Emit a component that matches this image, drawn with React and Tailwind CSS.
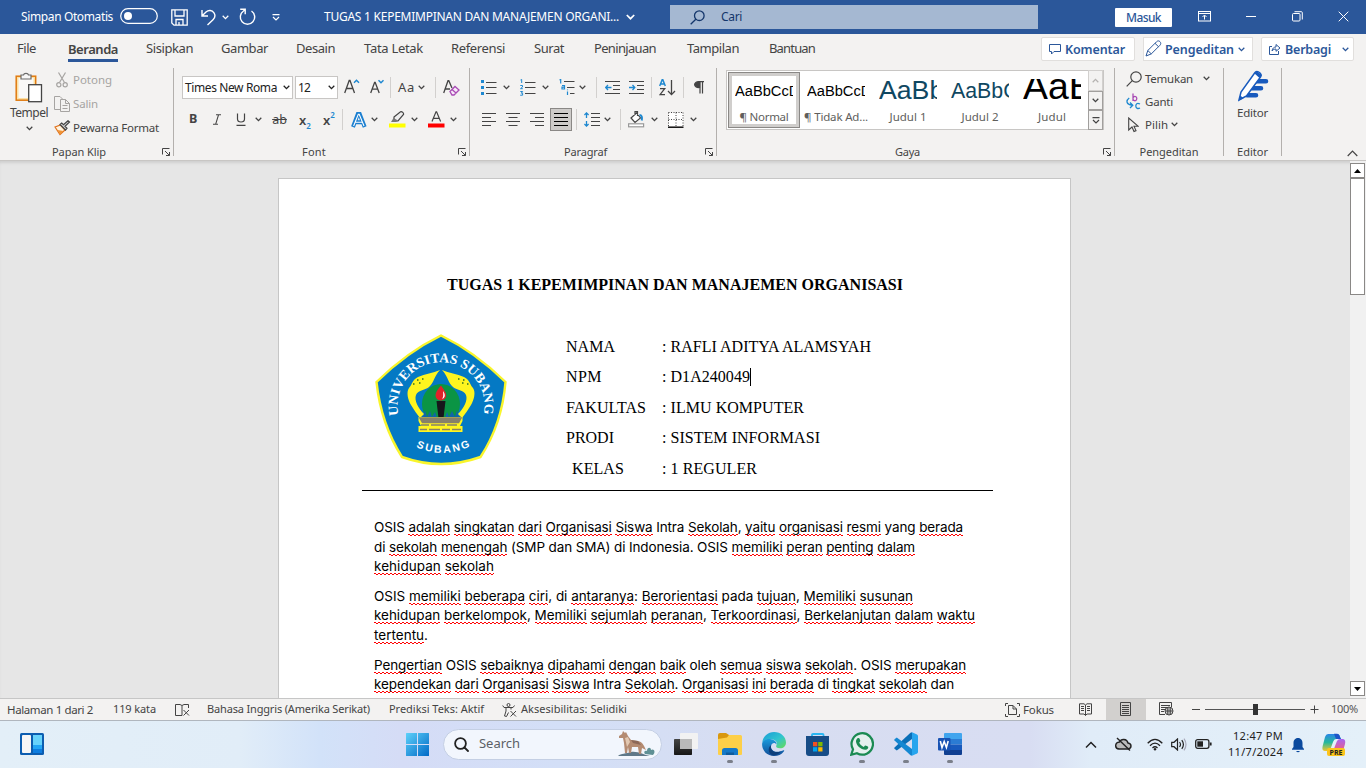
import React, { useLayoutEffect, useRef, useState } from "react";

/* Single line of text whose tracking is adjusted so it fills the width of its box. */
function T({ className = "", children }) {
  const box = useRef(null);
  const inner = useRef(null);
  const [ls, setLs] = useState(0);
  useLayoutEffect(() => {
    const n = inner.current.textContent.length;
    const natural = inner.current.getBoundingClientRect().width;
    setLs((box.current.clientWidth - natural) / Math.max(1, n));
  }, []);
  return (
    <span ref={box} className={"block shrink-0 whitespace-nowrap " + className}>
      <span ref={inner} style={{ letterSpacing: ls + "px" }}>{children}</span>
    </span>
  );
}

function I({ w, h, className = "", children, ...rest }) {
  return (
    <svg width={w} height={h} viewBox={`0 0 ${w} ${h}`} fill="none" stroke="currentColor" strokeWidth="1" className={"block shrink-0 " + className} {...rest}>
      {children}
    </svg>
  );
}

const Chev = ({ className = "" }) => (
  <I w={7} h={5} className={className} strokeWidth="1.3"><path d="M.7 .8L3.5 3.6L6.3 .8" /></I>
);
const Sep = ({ className = "" }) => <div className={"h-[21px] w-px shrink-0 bg-[#d2d0ce] " + className} />;
const GroupLine = () => <div className="mt-[2px] h-[88px] w-px shrink-0 bg-[#b3b0ad]" />;
const Launcher = ({ className = "" }) => (
  <I w={9} h={9} className={className}><path d="M.5 6.5V.5H7.5M3 3L7.5 7.5M7.5 4V7.5H4" /></I>
);

function TitleBar() {
  return (
    <header className="flex h-[34px] shrink-0 items-center bg-[#2b579a] text-[12px] text-white">
      <T className="ml-[21px] w-[92px]">Simpan Otomatis</T>
      <I w={38} h={16} className="-mt-[2px] ml-[7px]"><rect x=".7" y=".7" width="36.6" height="14.6" rx="7.3" strokeWidth="1.2" /><circle cx="8" cy="8" r="4" fill="white" stroke="none" /></I>
      <I w={17} h={17} className="ml-[13px] mt-[1px]" strokeWidth="1.3"><path d="M.8 .8H16.2V16.2H3L.8 14ZM4 1V7H13V1M5 16V10.5H12V16M8 13V16" /></I>
      <I w={15} h={17} className="ml-[13px]" strokeWidth="1.4"><path d="M1 1V7H7M1.2 6.8L5 3C7.5 .8 11 1 13 3.8C14.6 6.3 14 8.7 12 10.7L6.5 16" /></I>
      <Chev className="ml-[6px]" />
      <I w={17} h={18} className="ml-[10px]" strokeWidth="1.4"><path d="M1.2 1.2H6.2V6.2M12.5 3A7.2 7.2 0 1 1 4.5 3L6 1.5" /></I>
      <I w={8} h={7} className="ml-[16px]" strokeWidth="1.2"><path d="M.5 .7H7.5M1 3L4 6L7 3" /></I>
      <T className="ml-[44px] w-[295px]">TUGAS 1 KEPEMIMPINAN DAN MANAJEMEN ORGANI...</T>
      <I w={9} h={6} className="ml-[7px]" strokeWidth="1.7"><path d="M.8 1L4.5 4.7L8.2 1" /></I>
      <div className="ml-[35px] flex h-[24px] w-[368px] shrink-0 items-center bg-[#a5b8d2] text-[#14366b]">
        <I w={15} h={15} className="ml-[20px]" strokeWidth="1.3"><circle cx="9.3" cy="5.7" r="4.8" /><path d="M5.8 9.2L.7 14.3" /></I>
        <T className="ml-[16px] w-[21px]">Cari</T>
      </div>
      <div className="ml-[77px] flex h-[19px] w-[57px] shrink-0 items-center justify-center rounded-[1px] bg-white pt-[2px] text-[#2b579a]">
        <T className="w-[35px] font-medium">Masuk</T>
      </div>
      <I w={13} h={11} className="-mt-[2px] ml-[26px]"><rect x=".5" y=".5" width="12" height="9.5" /><path d="M1 2.5H12M6.5 8.5V4.5M4.5 6L6.5 4L8.5 6" /></I>
      <div className="-mt-[2px] ml-[35px] h-px w-[10px] bg-white" />
      <I w={11} h={11} className="-mt-[2px] ml-[36px]"><rect x=".5" y="2.5" width="7.5" height="7.5" rx="1" /><path d="M2.5 .7H9.3C10 .7 10.3 1 10.3 1.7V8.5" /></I>
      <I w={11} h={11} className="-mt-[2px] ml-[35px]"><path d="M.7 .7L10.3 10.3M10.3 .7L.7 10.3" /></I>
    </header>
  );
}

function Tabs() {
  return (
    <nav className="flex h-[32px] shrink-0 items-center pb-[2px] text-[13px] text-[#444]">
      <T className="ml-[17px] w-[19px]">File</T>
      <div className="ml-[32px] flex h-full w-[50px] shrink-0 flex-col">
        <T className="h-[25px] w-[50px] pt-[3px] font-semibold leading-[24px] text-[#444]">Beranda</T>
        <div className="h-[3px] shrink-0 bg-[#2b579a]" />
      </div>
      <T className="ml-[28px] w-[47px]">Sisipkan</T>
      <T className="ml-[28px] w-[47px]">Gambar</T>
      <T className="ml-[28px] w-[39px]">Desain</T>
      <T className="ml-[29px] w-[59px]">Tata Letak</T>
      <T className="ml-[28px] w-[54px]">Referensi</T>
      <T className="ml-[29px] w-[30px]">Surat</T>
      <T className="ml-[30px] w-[62px]">Peninjauan</T>
      <T className="ml-[31px] w-[52px]">Tampilan</T>
      <T className="ml-[30px] w-[46px]">Bantuan</T>
      <div className="ml-[226px] flex h-[24px] w-[94px] shrink-0 items-center rounded-[2px] border border-[#e1dfdd] bg-white text-[12.5px] font-semibold text-[#2b579a]">
        <I w={12} h={11} className="ml-[7px]"><path d="M.5 .5H11.5V7.5H5L2.5 10V7.5H.5Z" /></I>
        <T className="ml-[4px] w-[60px] pt-[2px]">Komentar</T>
      </div>
      <div className="ml-[8px] flex h-[24px] w-[110px] shrink-0 items-center border border-[#e1dfdd] bg-white text-[12.5px] font-semibold text-[#2b579a]">
        <I w={17} h={17} className="-mt-[2px] ml-[1px]"><path d="M1 16L2.8 10.5L11.5 1.8C12.8 .5 14 .7 15 1.7C16 2.8 16 4 15 5.2L6.3 13.9ZM2.8 10.5L6.3 13.9M10 3.3L13.5 6.7" /></I>
        <T className="ml-[3px] w-[69px] pt-[2px]">Pengeditan</T>
        <Chev className="ml-[4px]" />
      </div>
      <div className="ml-[8px] flex h-[24px] w-[93px] shrink-0 items-center rounded-[2px] border border-[#e1dfdd] bg-white text-[12.5px] font-semibold text-[#2b579a]">
        <I w={12} h={12} className="ml-[7px]"><path d="M3 3.5H.5V11.5H9.5V8M3 8C3.5 5 5 4 7 4V1.5L11 5L7 8.3V6C5.5 6 4 6.5 3 8Z" /></I>
        <T className="ml-[4px] w-[46px] pt-[2px]">Berbagi</T>
        <Chev className="ml-[11px]" />
      </div>
    </nav>
  );
}

function ClipboardGroup() {
  return (
    <div className="flex w-[173px] shrink-0 flex-col">
      <div className="flex h-[78px]">
        <div className="ml-[10px] flex w-[38px] shrink-0 flex-col items-center">
          <I w={28} h={31} className="mt-[6px]" strokeWidth="1.5">
            <rect x="1.2" y="4.2" width="19.5" height="24" fill="#fbe0a4" stroke="#e07a10" />
            <rect x="3.5" y="6" width="15" height="20" fill="#faf9f8" stroke="none" />
            <path d="M6 7V3H8.5C9 .8 13 .8 13.5 3H16V7Z" fill="#f7f7f7" stroke="#6a6a6a" strokeWidth="1.2" />
            <rect x="13.7" y="12.7" width="12.8" height="17" fill="white" stroke="#444" strokeWidth="1.3" />
          </I>
          <T className="w-[38px] leading-[20px]">Tempel</T>
          <Chev className="mt-[3px]" />
        </div>
        <div className="ml-[6px] flex flex-col pt-[2px] text-[11.5px]">
          <div className="flex h-[24px] items-center text-[#a6a4a2]">
            <I w={13} h={16} className="ml-[2px]" strokeWidth="1.2"><path d="M2.5 .5L8.5 10.5M9.5 .5L3.5 10.5" /><circle cx="2.8" cy="12.8" r="2.1" /><circle cx="9.2" cy="12.8" r="2.1" /></I>
            <T className="ml-[4px] w-[39px]">Potong</T>
          </div>
          <div className="flex h-[24px] items-center text-[#a6a4a2]">
            <I w={17} h={16}><path d="M6 13.5H.5V.5H6L8.5 3M6.5 3.5H11.5L15.5 7.5V15.5H6.5ZM11.5 3.5V7.5H15.5M8.5 9.5H13.5M8.5 12.5H13.5" /></I>
            <T className="ml-[2px] w-[25px]">Salin</T>
          </div>
          <div className="flex h-[24px] items-center">
            <I w={17} h={16} strokeWidth="1.2"><path d="M1 7L6 14.5L11 10L6.5 5Z" fill="#fff4df" stroke="#e0701a" /><path d="M3.5 10L6 14.5L9.5 11Z" fill="#f09436" stroke="none" /><path d="M6 4.5L11.5 10L13 8.3L11 6.2L15.5 2L14 .7L9.5 4.6L7.7 3Z" fill="#d6d6d6" stroke="#444" /></I>
            <T className="ml-[2px] w-[86px]">Pewarna Format</T>
          </div>
        </div>
      </div>
      <div className="flex h-[16px] items-center text-[11px]">
        <T className="ml-[52px] w-[54px]">Papan Klip</T>
        <Launcher className="ml-[56px]" />
      </div>
    </div>
  );
}

function FontGroup() {
  return (
    <div className="flex w-[295px] shrink-0 flex-col">
      <div className="mt-[10px] flex h-[23px] items-center">
        <div className="ml-[8px] flex h-[23px] w-[111px] shrink-0 items-center border border-[#c8c6c4] bg-white text-[#222]">
          <T className="ml-[2px] w-[92px]">Times New Roma</T>
          <Chev className="ml-[6px]" />
        </div>
        <div className="ml-[2px] flex h-[23px] w-[43px] shrink-0 items-center border border-[#c8c6c4] bg-white text-[#222]">
          <T className="ml-[2px] w-[12px]">12</T>
          <Chev className="ml-[18px]" />
        </div>
        <I w={16} h={15} className="-mt-[2px] ml-[6px]" strokeWidth="1.3"><path d="M.7 14L5.2 1.5H6L10.5 14M2.3 9.5H9" /><path d="M10 3.8L12.5 1.2L15 3.8" stroke="#1e88d0" strokeWidth="1.4" /></I>
        <I w={15} h={15} className="-mt-[2px] ml-[10px]" strokeWidth="1.3"><path d="M.7 14L4.6 3.5H5.2L9.2 14M2 10.2H7.8" /><path d="M8.5 1.2L11 3.8L13.5 1.2" stroke="#1e88d0" strokeWidth="1.4" /></I>
        <Sep className="ml-[5px]" />
        <T className="ml-[7px] w-[17px] text-[13px]">Aa</T>
        <Chev className="ml-[3px]" />
        <Sep className="ml-[10px]" />
        <I w={17} h={16} className="ml-[7px]" strokeWidth="1.3"><path d="M.7 13L5 .7H5.8L9 8M2 9H7" /><path d="M7 11.5L12 6.5L16 10L11 15H9Z M9 9.5L13 13" stroke="#a94bb5" fill="#f7e9f8" /></I>
      </div>
      <div className="mt-[9px] flex h-[23px] items-center">
        <T className="ml-[15px] w-[8px] text-[12.5px] font-bold">B</T>
        <I w={8} h={11} className="ml-[16px]" strokeWidth="1.1"><path d="M3 .7H8M0 10.3H5M5.6 .7L2.6 10.3" /></I>
        <I w={10} h={13} className="ml-[15px]" strokeWidth="1.2"><path d="M1.5 .5V6C1.5 10 8.5 10 8.5 6V.5M.5 12.3H9.5" /></I>
        <Chev className="ml-[9px]" />
        <div className="ml-[9px] flex h-[16px] w-[17px] shrink-0 flex-col items-center justify-center">
          <span className="text-[12.5px] leading-[16px] line-through">ab</span>
        </div>
        <div className="ml-[11px] flex w-[12px] shrink-0 items-end font-semibold"><span className="text-[13px] leading-[16px]">x</span><span className="-mb-[2px] text-[8px] leading-[9px] text-[#1e88d0]">2</span></div>
        <div className="ml-[12px] flex w-[12px] shrink-0 items-start font-semibold"><span className="text-[13px] leading-[16px]">x</span><span className="-mt-[2px] text-[8px] leading-[9px] text-[#1e88d0]">2</span></div>
        <Sep className="ml-[7px]" />
        <I w={16} h={16} className="ml-[8px]"><path d="M2 15L7 1.5H8.5L13.7 15M4.5 10.3H11.2" stroke="#1b7fd0" strokeWidth="4" /><path d="M2.6 14L7.3 2.3H8.2L13 14M4.5 10.3H11.2" stroke="white" strokeWidth="1.1" /></I>
        <Chev className="ml-[4px]" />
        <I w={17} h={17} className="ml-[11px]" strokeWidth="1.2"><path d="M5 6L11.5 .8C13 .3 15 2 14.5 3.5L9 10H6.5L5 8.5Z" fill="#eee" /><path d="M4.5 7L2 11H7L9 9.5Z" fill="#777" stroke="none" /><rect x="0" y="12.5" width="16.5" height="4" fill="#ffff00" stroke="none" /></I>
        <Chev className="ml-[5px]" />
        <I w={17} h={17} className="ml-[10px]" strokeWidth="1.2"><path d="M4 10.5L8 .8H8.6L12.6 10.5M5.3 7.3H11.3" /><rect x="0" y="12.5" width="16.5" height="4" fill="#ff0000" stroke="none" /></I>
        <Chev className="ml-[5px]" />
      </div>
      <div className="mt-[13px] flex h-[16px] items-center text-[11px]">
        <T className="ml-[128px] w-[24px]">Font</T>
        <Launcher className="ml-[132px]" />
      </div>
    </div>
  );
}

function ParagraphGroup() {
  return (
    <div className="flex w-[246px] shrink-0 flex-col">
      <div className="mt-[10px] flex h-[23px] items-center">
        <I w={16} h={15} className="ml-[11px]"><path d="M5 2.5H15.5M5 7.5H15.5M5 13.5H15.5" /><path d="M0 1.5H3M0 7.5H3M0 13.5H3" stroke="#1e88d0" strokeWidth="3" /></I>
        <Chev className="ml-[6px]" />
        <I w={16} h={17} className="ml-[10px]"><path d="M5 3.5H15.5M5 8.5H15.5M5 14.5H15.5" /><path d="M.5 1L1.7 .5V4M.3 6.5H2.5V8L.5 9.7H2.8M.3 12.5H2.6L1.3 14.2H2.6V16.2H.2" stroke="#1e88d0" /></I>
        <Chev className="ml-[6px]" />
        <I w={16} h={17} className="ml-[10px]"><path d="M5 2.5H15.5M8 8.5H15.5M11 14.5H15.5" /><path d="M.5 1L1.7 .5V4.5M3 6.5H5.5V10H3V8.2H5.5M8.5 12.5V16M8.5 10.5V11.3" stroke="#1e88d0" strokeWidth="1.2" /></I>
        <Chev className="ml-[4px]" />
        <Sep className="ml-[10px]" />
        <I w={15} h={13} className="ml-[8px]"><path d="M0 .5H15M8 4.5H15M8 8.5H15M0 12.5H15" /><path d="M.7 6.5H6.5M3 4L.7 6.5L3 9" stroke="#1e88d0" strokeWidth="1.3" /></I>
        <I w={15} h={13} className="ml-[9px]"><path d="M0 .5H15M8 4.5H15M8 8.5H15M0 12.5H15" /><path d="M0 6.5H5.8M3.5 4L5.8 6.5L3.5 9" stroke="#1e88d0" strokeWidth="1.3" /></I>
        <Sep className="ml-[7px]" />
        <I w={17} h={17} className="ml-[7px]" strokeWidth="1.3"><path d="M.7 7L3.2 .7H3.8L6.3 7M1.5 5H5.5" stroke="#1e88d0" strokeWidth="1.5" /><path d="M1 9.7H5.7L1 15.7H6M12.5 1V15.5M9 12L12.5 15.6L16 12" /></I>
        <Sep className="ml-[7px]" />
        <I w={10} h={13} className="ml-[10px]" strokeWidth="1.2"><path d="M10 .7H4.5M6 .7V12.5M8.5 .7V12.5" /><path d="M5.5 .7C-1 0 -1 7 5.5 6.5Z" fill="currentColor" /></I>
      </div>
      <div className="mt-[9px] flex h-[23px] items-center">
        <I w={15} h={13} className="ml-[12px]"><path d="M0 .5H14M0 4.5H9M0 8.5H14M0 12.5H9" /></I>
        <I w={15} h={13} className="ml-[9px]"><path d="M0 .5H14M2.5 4.5H11.5M0 8.5H14M2.5 12.5H11.5" /></I>
        <I w={15} h={13} className="ml-[9px]"><path d="M0 .5H14M5 4.5H14M0 8.5H14M5 12.5H14" /></I>
        <div className="ml-[5px] flex h-[23px] w-[22px] shrink-0 items-center justify-center border border-[#8a8886] bg-[#cdcbc9] text-black">
          <I w={14} h={13}><path d="M0 .5H14M0 4.5H14M0 8.5H14M0 12.5H14" /></I>
        </div>
        <Sep className="ml-[4px]" />
        <I w={16} h={15} className="ml-[7px]"><path d="M7 1.5H16M7 5.5H16M7 9.5H16M7 13.5H16" /><path d="M2.5 1V6M.4 3L2.5 .9L4.6 3M2.5 9V14M.4 12L2.5 14.1L4.6 12" stroke="#1e88d0" strokeWidth="1.3" /></I>
        <Chev className="ml-[4px]" />
        <Sep className="ml-[9px]" />
        <I w={17} h={17} className="ml-[7px]" strokeWidth="1.2"><path d="M3 7L8.5 2L12.5 7L7 11.5Z M7 4V.7H9.5V5" fill="white" /><path d="M11.5 4C13.5 4 14.5 6 13.7 9.5" stroke="#1e88d0" strokeWidth="2" /><rect x=".6" y="12.8" width="15" height="3" fill="white" stroke="#999" /></I>
        <Chev className="ml-[6px]" />
        <I w={16} h={16} className="ml-[10px]"><rect x="1" y="1" width="14" height="13" fill="white" stroke="none" /><path d="M.5 .5H15.5M.5 .5V14M15 .5V14M8 .5V14M.5 7.5H15.5" strokeDasharray="1 1.5" /><path d="M0 15.2H15.5" stroke="black" strokeWidth="1.4" /></I>
        <Chev className="ml-[6px]" />
      </div>
      <div className="mt-[13px] flex h-[16px] items-center text-[11px]">
        <T className="ml-[94px] w-[43px]">Paragraf</T>
        <Launcher className="ml-[98px]" />
      </div>
    </div>
  );
}

function Style({ sample, size, name, nameW, selected }) {
  return (
    <div className={"flex h-[56px] w-[72px] shrink-0 flex-col items-center " + (selected ? "border border-[#8a8886] shadow-[inset_0_0_0_3px_#d0cecc]" : "border border-transparent")}>
      <div className={"mt-[6px] flex h-[21px] w-[58px] shrink-0 items-end overflow-hidden whitespace-nowrap font-['Liberation_Sans',sans-serif] " + size}>{sample}</div>
      <T className={"mt-[7px] text-[11.5px] leading-[20px] text-[#605e5c] " + nameW}>{name}</T>
    </div>
  );
}

function StylesGroup() {
  return (
    <div className="flex w-[397px] shrink-0 flex-col">
      <div className="ml-[9px] mt-[4px] flex h-[60px] w-[378px] border border-[#c8c6c4] bg-white">
        <div className="ml-[1px] mt-[1px] flex w-[361px]">
          <Style selected sample="AaBbCcD" size="text-[14.67px] leading-[17px] text-black" name="¶ Normal" nameW="w-[49px]" />
          <Style sample="AaBbCcD" size="text-[14.67px] leading-[17px] text-black" name="¶ Tidak Ad..." nameW="w-[64px]" />
          <Style sample="AaBb" size="text-[26.67px] leading-[20.5px] text-[#0f4761]" name="Judul 1" nameW="w-[37px]" />
          <Style sample="AaBbC" size="text-[21.33px] leading-[17px] text-[#0f4761]" name="Judul 2" nameW="w-[37px]" />
          <Style sample="AaB" size="text-[37.33px] leading-[28px] text-black" name="Judul" nameW="w-[28px]" />
        </div>
        <div className="-my-px flex w-[15px] flex-col">
          <div className="flex h-[21px] items-center justify-center border border-[#d2d0ce] bg-[#f3f2f1] text-[#b5b3b1]"><Chev className="rotate-180" /></div>
          <div className="flex h-[19px] items-center justify-center border border-[#a19f9d] bg-[#f3f2f1]"><Chev /></div>
          <div className="flex h-[20px] items-center justify-center border border-[#a19f9d] bg-[#f3f2f1]"><I w={8} h={7} strokeWidth="1.2"><path d="M.5 .7H7.5M1 3L4 6L7 3" /></I></div>
        </div>
      </div>
      <div className="mt-[14px] flex h-[16px] items-center text-[11px]">
        <T className="ml-[178px] w-[25px]">Gaya</T>
        <Launcher className="ml-[183px]" />
      </div>
    </div>
  );
}

function Ribbon() {
  return (
    <section className="flex h-[95px] shrink-0 border-b border-[#c8c6c4] text-[12px] text-[#444]">
      <ClipboardGroup />
      <GroupLine />
      <FontGroup />
      <GroupLine />
      <ParagraphGroup />
      <GroupLine />
      <StylesGroup />
      <GroupLine />
      <div className="flex w-[108px] shrink-0 flex-col">
        <div className="flex h-[78px] flex-col pt-[1px] text-[11.5px]">
          <div className="flex h-[23px] items-center">
            <I w={16} h={16} className="ml-[11px]" strokeWidth="1.2"><circle cx="10" cy="6" r="5.2" /><path d="M6.3 9.7L.7 15.3" /></I>
            <T className="ml-[3px] w-[48px]">Temukan</T>
            <Chev className="ml-[10px]" />
          </div>
          <div className="flex h-[23px] items-center">
            <I w={15} h={17} className="ml-[11px]" strokeWidth="1.3"><path d="M7 .5V8M7 5.3A1.9 2.2 0 1 1 7 5.8" stroke="#a94bb5" /><path d="M14 11C11 9.500 9.800 11 9.800 13C9.800 15.500 12 16 14 15" stroke="#1e88d0" /><path d="M3.200 5C-.5 8 .5 11.500 6 12.200M4 9.500L6.800 12.200L4 15" stroke="#1e88d0" /></I>
            <T className="ml-[4px] w-[28px]">Ganti</T>
          </div>
          <div className="flex h-[23px] items-center">
            <I w={11} h={16} className="ml-[13px]" strokeWidth="1.1"><path d="M.7 1V13L4 10L6 14.5L8 13.6L6 9.2H10Z" /></I>
            <T className="ml-[6px] w-[23px]">Pilih</T>
            <Chev className="ml-[3px]" />
          </div>
        </div>
        <div className="flex h-[16px] items-center justify-center text-[11px]"><T className="w-[59px]">Pengeditan</T></div>
      </div>
      <GroupLine />
      <div className="flex w-[57px] shrink-0 flex-col items-center">
        <I w={31} h={32} className="ml-[1px] mt-[4px]"><path d="M18 11.3H28M14 18.3H23M9 25.3H18" stroke="#185abd" strokeWidth="4.6" strokeLinecap="round" /><path d="M1 30L3 22L17 2.5C18.5 1 20.5 1.7 22 3C23.5 4.5 23.5 5.7 22.5 7L8.5 26Z" fill="white" stroke="#185abd" strokeWidth="1.5" /><path d="M16.5 3.5L18.5 1L23.7 5L21.5 8Z M1 30.5L2.3 25.5L5.5 28.3Z" fill="#185abd" stroke="none" /></I>
        <T className="mt-[1px] w-[31px] text-[11.5px] leading-[20px]">Editor</T>
        <div className="mt-[21px] flex h-[16px] items-center text-[11px]"><T className="w-[31px]">Editor</T></div>
      </div>
      <GroupLine />
      <I w={11} h={7} className="ml-[65px] mt-[84px]" strokeWidth="1.2"><path d="M.7 6L5.5 1.2L10.3 6" /></I>
    </section>
  );
}

function Crest() {
  return (
    <svg width="132" height="132" viewBox="0 0 132 132" className="block shrink-0">
      <path d="M66 1.500Q100 18 130.500 48Q127 90 105.500 123Q66 137 27 123Q6 90 1.500 48Q32 18 66 1.500Z" fill="#0479c4" stroke="#f9f52b" strokeWidth="2.400" />
      <defs>
        <path id="arcTop" d="M23.500 81A43.500 43.500 0 1 1 108.500 81" />
        <path id="arcBottom" d="M40 112.500Q67 125.500 96 112" />
      </defs>
      <text fill="white" fontFamily="Liberation Serif, serif" fontWeight="bold" fontSize="13.500"><textPath href="#arcTop" textLength="154" lengthAdjust="spacingAndGlyphs">UNIVERSITAS SUBANG</textPath></text>
      <text fill="white" fontFamily="Liberation Sans, sans-serif" fontWeight="bold" fontSize="10.500"><textPath href="#arcBottom" textLength="56" lengthAdjust="spacing" startOffset="1">SUBANG</textPath></text>
      <ellipse cx="66" cy="70" rx="19" ry="20" fill="#0b9444" />
      <path d="M47 84V78L48 84L50 76L52 83L55 77L57 83L60 78L62 84H70L72 78L74 83L77 77L80 83L82 76L84 84L86 78V85H47Z" fill="#1265a8" />
      <path d="M65 36C58 39 50 40 43 43C37 46 37 51 34 54C31 58 33 66 36 71C39 76 42 80 45 84L49 80C43 74 39 66 41 61C43 56 51 56 54 53C59 49 59 42 65 36Z" fill="#fff51f" />
      <path d="M67 36C74 39 82 40 89 43C95 46 95 51 98 54C101 58 99 66 96 71C93 76 90 80 87 84L83 80C89 74 93 66 91 61C89 56 81 56 78 53C73 49 73 42 67 36Z" fill="#fff51f" />
      <path d="M42 46h1.500M47 45h1.500M38 50h1.500M44 49h1.500M88 46h1.500M83 45h1.500M92 50h1.500M87 49h1.500" stroke="#35701f" strokeWidth="1.500" />
      <path d="M61.500 67H70.500L68.500 84H63.500Z" fill="#17171b" />
      <path d="M66 51.500C62 56 58.500 61 62 65C64 67 69 67 70.500 64C73 60 69 56 66 51.500Z" fill="#e02229" />
      <path d="M68 57C71 61 70 64 67 65C69 62 68 60 68 57Z" fill="white" />
      <path d="M43.500 83H87.500V87L85 92H87.500V98H43.500V92H46L43.500 87Z" fill="#fff51f" />
      <path d="M45 84H86L83.500 88.500H47.500ZM46 91h8M56 91h14M72 91h10M45 95.500h7M54 95.500h11M67 95.500h8M77 95.500h9" fill="#87816a" stroke="#87816a" strokeWidth="1.600" />
    </svg>
  );
}

/* Word flagged by the spelling checker: a two-row zigzag drawn under the baseline. */
const U = ({ children }) => (
  <span className="bg-[linear-gradient(90deg,#f00_50%,transparent_50%),linear-gradient(90deg,transparent_50%,#f00_50%)] bg-[length:4px_1px] bg-repeat-x pb-[1px] [background-position:0_calc(100%_-_1px),0_100%]">{children}</span>
);

function Field({ label, labelClass, valueClass, children, cursor }) {
  return (
    <div className="flex h-[30.5px] items-center">
      <div className="w-[96px] shrink-0"><T className={labelClass}>{label}</T></div>
      <T className={valueClass}>{children}</T>
      {cursor && <div className="h-[18px] w-px bg-black" />}
    </div>
  );
}

function Document() {
  const line = "h-[19.6px] leading-[19.6px] ";
  return (
    <article className="ml-[278px] mt-[17px] flex w-[793px] shrink-0 flex-col border border-b-0 border-[#c6c6c6] bg-white text-black">
      <T className="ml-[168px] mt-[96px] w-[456px] font-['Liberation_Serif',serif] text-[16px] font-bold leading-[20px]">TUGAS 1 KEPEMIMPINAN DAN MANAJEMEN ORGANISASI</T>
      <div className="mt-[35px] flex h-[160px] font-['Liberation_Serif',serif] text-[16px]">
        <div className="ml-[96px] mt-[4px] w-[191px] shrink-0"><Crest /></div>
        <div className="flex flex-col pt-[1.5px]">
          <Field label="NAMA" labelClass="w-[49px]" valueClass="w-[209px]">: RAFLI ADITYA ALAMSYAH</Field>
          <Field label="NPM" labelClass="w-[36px]" valueClass="w-[88px]" cursor>: D1A240049</Field>
          <Field label="FAKULTAS" labelClass="w-[80px]" valueClass="w-[142px]">: ILMU KOMPUTER</Field>
          <Field label="PRODI" labelClass="w-[48px]" valueClass="w-[158px]">: SISTEM INFORMASI</Field>
          <Field label="KELAS" labelClass="ml-[6px] w-[52px]" valueClass="w-[95px]">: 1 REGULER</Field>
        </div>
      </div>
      <div className="ml-[83px] h-px w-[631px] shrink-0 bg-black" />
      <div className="ml-[95px] mt-[27px] flex flex-col font-[Inter,sans-serif] text-[13.5px] text-black">
        <T className={line + "w-[589px]"}>OSIS <U>adalah</U> <U>singkatan</U> <U>dari</U> <U>Organisasi</U> <U>Siswa</U> Intra <U>Sekolah</U>, <U>yaitu</U> <U>organisasi</U> <U>resmi</U> yang <U>berada</U></T>
        <T className={line + "w-[541px]"}>di <U>sekolah</U> <U>menengah</U> (SMP dan SMA) di Indonesia. OSIS <U>memiliki</U> <U>peran</U> <U>penting</U> <U>dalam</U></T>
        <T className={line + "w-[120px]"}><U>kehidupan</U> <U>sekolah</U></T>
        <T className={line + "mt-[10px] w-[539px]"}>OSIS <U>memiliki</U> <U>beberapa</U> <U>ciri</U>, di <U>antaranya</U>: <U>Berorientasi</U> pada <U>tujuan</U>, <U>Memiliki</U> <U>susunan</U></T>
        <T className={line + "w-[601px]"}><U>kehidupan</U> <U>berkelompok</U>, <U>Memiliki</U> <U>sejumlah</U> <U>peranan</U>, <U>Terkoordinasi</U>, <U>Berkelanjutan</U> <U>dalam</U> <U>waktu</U></T>
        <T className={line + "w-[54px]"}><U>tertentu</U>.</T>
        <T className={line + "mt-[10px] w-[592px]"}><U>Pengertian</U> OSIS <U>sebaiknya</U> <U>dipahami</U> <U>dengan</U> <U>baik</U> oleh <U>semua</U> <U>siswa</U> <U>sekolah</U>. OSIS <U>merupakan</U></T>
        <T className={line + "w-[580px]"}><U>kependekan</U> <U>dari</U> <U>Organisasi</U> <U>Siswa</U> Intra <U>Sekolah</U>. <U>Organisasi</U> <U>ini</U> <U>berada</U> di <U>tingkat</U> <U>sekolah</U> dan</T>
      </div>
    </article>
  );
}

function ScrollBar() {
  return (
    <div className="ml-auto flex w-[16px] shrink-0 flex-col bg-[#f1f1f1] pt-[2px] text-black">
      <div className="flex h-[15px] w-[15px] items-center justify-center border border-[#8a8886] bg-white"><I w={7} h={4}><path d="M0 4L3.500 0L7 4Z" fill="currentColor" stroke="none" /></I></div>
      <div className="h-[117px] w-[15px] border border-[#8a8886] bg-white" />
      <div className="mt-auto mb-[2px] flex h-[15px] w-[15px] items-center justify-center border border-[#8a8886] bg-white"><I w={7} h={4}><path d="M0 0L3.500 4L7 0Z" fill="currentColor" stroke="none" /></I></div>
    </div>
  );
}

function StatusBar() {
  return (
    <footer className="flex h-[23px] shrink-0 items-center border-y border-t-[#c6c6c6] border-b-[#b0b6be] bg-[#f3f2f1] text-[11.5px] text-[#444]">
      <T className="ml-[7px] w-[86px] pt-px">Halaman 1 dari 2</T>
      <T className="ml-[20px] w-[43px] text-[11px]">119 kata</T>
      <I w={15} h={14} className="ml-[19px]"><path d="M7 12.500H.5V1.500H5L7 2.500L9 1.500H13.500V5M7 2.500V12.500M8.500 7L14 12.500M14 7L8.500 12.500" /></I>
      <T className="ml-[17px] w-[163px] text-[11px]">Bahasa Inggris (Amerika Serikat)</T>
      <T className="ml-[19px] w-[95px] text-[11px]">Prediksi Teks: Aktif</T>
      <I w={15} h={14} className="ml-[18px]"><circle cx="6.500" cy="2" r="1.500" /><path d="M.7 2.500L2 4.500H11L12.500 2.500M4 4.500V8L2.500 13L4.500 13.500L6.500 9.500M9 4.500V6.500M8.500 8L14 13.500M14 8L8.500 13.500" /></I>
      <T className="ml-[4px] w-[106px] text-[11px]">Aksesibilitas: Selidiki</T>
      <I w={15} h={14} className="ml-[378px]"><path d="M3 .5H.5V3M.5 11V13.500H3M12 .5H14.500V3M14.500 11V13.500H12M3.500 2.500H8L11.500 6V11.500H3.500ZM8 2.500V6H11.500" /></I>
      <T className="ml-[3px] w-[31px] pt-px">Fokus</T>
      <I w={13} h={13} className="-mt-px ml-[25px]"><path d="M6.500 2V12.500M.5 .8H5L6.500 2L8 .8H12.500V11H8L6.500 12.500L5 11H.5ZM2 3.500H5M2 5.500H5M2 7.500H5M8 3.500H11M8 5.500H11M8 7.500H11" /></I>
      <div className="ml-[14px] flex h-[21px] w-[40px] shrink-0 items-center justify-center bg-[#d2d0ce]"><I w={11} h={14} className="-ml-px -mt-px"><path d="M.5 .5H10.500V13.500H.5ZM2 3.500H9M2 5.500H9M2 7.500H9M2 9.500H9M2 11.500H9" /></I></div>
      <I w={15} h={14} className="-mt-px ml-[13px]"><path d="M6 12.500H.5V.5H12.500V5M2 3.500H11M2 5.500H8M2 7.500H6M2 9.500H5" /><circle cx="10" cy="9" r="4" /><path d="M6 9H14M10 5V13M8.300 5.500V12.500M11.700 5.500V12.500" /></I>
      <div className="-mt-px ml-[18px] h-px w-[8px] bg-[#444]" />
      <div className="ml-[5px] flex w-[100px] shrink-0 items-center">
        <div className="h-px w-[48px] bg-[#555]" /><div className="h-[11px] w-[5px] bg-[#333]" /><div className="h-px w-[47px] bg-[#555]" />
      </div>
      <I w={9} h={9} className="-mt-px ml-[5px]"><path d="M.5 4.500H8.500M4.500 .5V8.500" /></I>
      <T className="ml-[12px] w-[27px] text-[11px] text-[#555]">100%</T>
    </footer>
  );
}

function TaskIcon({ className, run, children }) {
  return (
    <div className={"flex h-[47px] w-[24px] shrink-0 flex-col items-center pt-[11px] " + className}>
      <svg width="24" height="24" viewBox="0 0 24 24" className="block shrink-0">{children}</svg>
      {run && <div className="mt-[4px] h-[3px] w-[6px] rounded-full bg-[#7b7f8a]" />}
    </div>
  );
}

function TaskBar() {
  return (
    <footer className="flex h-[47px] shrink-0 items-center bg-[linear-gradient(90deg,#e3eff8_0px,#e1edf8_240px,#d2e2f9_320px,#d5dcf6_400px,#d3dff7_560px,#d7ddf1_760px,#d8ddf2_1030px,#e0ecf8_1090px,#e4f0f9_1366px)] text-[#222]">
      <svg width="24" height="22" viewBox="0 0 24 22" className="-mt-px ml-[20px] block shrink-0"><rect width="24" height="22" rx="1.500" fill="#0c5db0" /><rect x="2" y="2" width="9" height="18" rx="1" fill="#f6f6f6" /><rect x="13" y="2" width="9" height="10" fill="#67d3fb" /><rect x="13" y="12" width="9" height="4" fill="#22a6f5" /><rect x="13" y="16" width="9" height="4" fill="#0d7de0" /></svg>
      <TaskIcon className="ml-[362px]">
        <defs><linearGradient id="win" x1="0" y1="0" x2="24" y2="24" gradientUnits="userSpaceOnUse"><stop stopColor="#5fd3fb" /><stop offset="1" stopColor="#0067c5" /></linearGradient></defs>
        <path d="M0 1.500Q0 1 .5 1H11V12H0ZM12 1H22.500Q23 1 23 1.500V12H12ZM0 13H11V24H.5Q0 24 0 23.500ZM12 13H23V23.500Q23 24 22.500 24H12Z" fill="url(#win)" />
      </TaskIcon>
      <div className="-mt-px ml-[13px] flex h-[31px] w-[219px] shrink-0 items-center rounded-full border border-[#c4cfe4] bg-[#f2f6fd]">
        <I w={15} h={15} className="ml-[10px]" strokeWidth="1.800"><circle cx="6.500" cy="6.500" r="5.400" /><path d="M10.500 10.500L14 14" strokeLinecap="round" /></I>
        <T className="ml-[10px] w-[41px] text-[13px] text-[#5b5f66]">Search</T>
        <svg width="38" height="26" viewBox="0 0 38 26" className="ml-[98px] block shrink-0">
          <path d="M0 25C3 22 8 23 13 21C20 20 26 24 32 25Z" fill="#5f7888" /><path d="M27 23C25 20 28 19 29 20C29 16 33 16 33 19C36 17 38 21 35 24Z" fill="#5f9095" />
          <path d="M1 5L4 3L5 0L7 2L8 1L10 5L13 9L20 10C25 11 26 15 28 19L24 17L23 23H21L20 16L14 16L13 22H11L10 16L9 22H7L6 12L5 7L1 7Z" fill="#b48b72" />
          <path d="M7 7L10 6L12 11L9 16Z" fill="#e2c8b2" /><path d="M13 9L20 10L23 14L15 12Z" fill="#8c6858" />
        </svg>
      </div>
      <TaskIcon className="ml-[12px]">
        <defs><linearGradient id="tv" x1="0" y1="0" x2="0" y2="1"><stop stopColor="#444" /><stop offset="1" stopColor="#161616" /></linearGradient></defs>
        <rect y="7" width="18" height="16" rx=".7" fill="url(#tv)" /><rect x="6" y="1" width="18" height="16" rx=".7" fill="#f2f2f2" /><rect x="6" y="7" width="12" height="10" fill="#b9b9b9" />
      </TaskIcon>
      <TaskIcon className="ml-[20px]" run>
        <path d="M0 3Q0 1 2 1H8L11 3V8H0Z" fill="#d9980f" /><path d="M0 7L9 5.500L11 3H22.500Q24 3 24 4.500V22Q24 23 23 23H1Q0 23 0 22Z" fill="#fdcf48" /><path d="M4 23V18.500Q4 16 6.500 16H17.500Q20 16 20 18.500V23Z" fill="#1478c8" /><path d="M8 23V20.500H16V23Z" fill="#0e5b9d" />
      </TaskIcon>
      <TaskIcon className="ml-[20px]" run>
        <defs><linearGradient id="eg" x1="0" y1="0" x2="1" y2="1"><stop stopColor="#199bd8" /><stop offset=".55" stopColor="#31c5cf" /><stop offset="1" stopColor="#67dc53" /></linearGradient><linearGradient id="eb" x1="0" y1="0" x2="0" y2="1"><stop stopColor="#1b9bdc" /><stop offset="1" stopColor="#124d98" /></linearGradient></defs>
        <path d="M.2 10.500C1 4.500 6 0 12 0C19 0 24 5 24 10.500C24 14 21.500 16.300 18 16.300C15 16.300 13.500 15 14.300 13.500C16 11 14 8 10.500 7.500C6 6.800 2 8 .2 10.500Z" fill="url(#eg)" />
        <path d="M.1 12C.2 8 5 6.500 9 7.200C12.500 7.800 15 10 14.500 12.500C13 9.500 9 11 9 14.500C9 19 14 21.500 21 18.500C22 18 22.600 18.500 22 19.200C19.500 22.500 16 24 12 24C5.500 24 0 19 .1 12Z" fill="url(#eb)" />
        <path d="M9.200 13C7.500 17.500 12 22 19 19.200C17 22.500 13 23.800 10 23C5.500 20.500 6 15 9.200 13Z" fill="#0d3f7c" />
      </TaskIcon>
      <TaskIcon className="ml-[20px]">
        <path d="M6 5V2.800Q6 2 7 2H16.500Q17.500 2 17.500 2.800V5" fill="none" stroke="#29b6f2" strokeWidth="1.800" /><path d="M0 4H23V21Q23 24 20 24H3Q0 24 0 21Z" fill="#174c86" />
        <path d="M7 10h4.300v4.300H7z" fill="#f25022" /><path d="M12.200 10h4.300v4.300h-4.300z" fill="#7fba00" /><path d="M7 15.200h4.300v4.300H7z" fill="#00a4ef" /><path d="M12.200 15.200h4.300v4.300h-4.300z" fill="#ffb900" />
      </TaskIcon>
      <TaskIcon className="ml-[20px]" run>
        <path d="M1.300 22.700L3 17.300A10.700 10.700 0 1 1 6.900 21.200Z" fill="#e4f0ee" stroke="#1a8a52" strokeWidth="2.200" />
        <path d="M7.500 6.200C8.500 5.700 9.200 5.800 9.600 6.800L10.300 8.700C10.400 9.500 9.600 10 9.200 10.500C10 12.500 11.500 14 13.700 14.900L15.100 13.500C15.500 13.200 18 14.500 18.200 14.900C18.400 16 17.500 17.500 15.500 17.800C10.500 17.800 6.200 13 6 9.500C6 8 6.500 7 7.500 6.200Z" fill="#1a8a52" />
      </TaskIcon>
      <TaskIcon className="ml-[20px]" run>
        <path d="M18 .3L23 2.500Q24 3 24 4V20Q24 21 23 21.500L18 23.800Z" fill="#27a5ee" /><path d="M18 .3V7L2.800 18.500L.5 16.700Q0 16 .5 15.500L16.500 .8Z" fill="#0a6fb8" /><path d="M18 23.800V17L2.800 5.500L.5 7.300Q0 8 .5 8.500L16.500 23.200Z" fill="#1487d2" />
      </TaskIcon>
      <TaskIcon className="ml-[20px]" run>
        <path d="M6 2Q6 1 7 1H23Q24 1 24 2V7H6Z" fill="#41a5ee" /><path d="M6 7H24V12.500H6Z" fill="#2b7cd3" /><path d="M6 12.500H24V18H6Z" fill="#185abd" /><path d="M6 18H24V22Q24 23 23 23H7Q6 23 6 22Z" fill="#103f91" /><rect y="6" width="12.500" height="12.500" rx="1" fill="#1853b3" />
        <path d="M2.300 9L4 15.500L6.200 9.500L8.400 15.500L10.200 9" fill="none" stroke="white" strokeWidth="1.600" />
      </TaskIcon>
      <I w={12} h={8} className="ml-[123px]" strokeWidth="1.500"><path d="M1 6.500L6 1.500L11 6.500" /></I>
      <I w={17} h={14} className="-mt-px ml-[18px]" strokeWidth="1.400"><path d="M4 12H13C17 11.500 17 6.500 13 6C12 1.500 6 1.500 4.500 5C-.5 5.500 -.5 11.500 4 12Z" fill="#bbb" /><path d="M2 1L15 13.500" stroke="#222" /></I>
      <I w={16} h={13} className="-mt-px ml-[15px]" strokeWidth="1.300"><path d="M.7 5.200Q8 -2.500 15.300 5.200M3 7.700Q8 2.600 13 7.700M5.500 10Q8 7.500 10.500 10" /><circle cx="8" cy="11.300" r="1.200" fill="currentColor" stroke="none" /></I>
      <I w={16} h={13} className="-mt-px ml-[8px]" strokeWidth="1.200"><path d="M.7 4.300H3L6.500 1V12L3 8.700H.7ZM8.500 4Q10.500 6.500 8.500 9M10.800 2.200Q14 6.500 10.800 10.800" /><path d="M13 .7Q17 6.500 13 12.300" stroke="#aab" /></I>
      <I w={17} h={10} className="-mt-px ml-[8px]" strokeWidth="1.300"><rect x=".7" y=".7" width="13.200" height="8.600" rx="2" /><rect x="2.300" y="2.300" width="5.700" height="5.400" fill="currentColor" stroke="none" /><path d="M15.700 3.500V6.500" strokeWidth="1.800" /></I>
      <div className="-mt-px ml-[16px] flex w-[55px] shrink-0 flex-col items-end text-[11px] leading-[16px]">
        <T className="w-[50px]">12:47 PM</T>
        <T className="w-[55px]">11/7/2024</T>
      </div>
      <I w={14} h={16} className="ml-[8px]"><path d="M1 12L2.500 10V6C2.500 -.7 11.500 -.7 11.500 6V10L13 12V12.800H1ZM5 14H9Q7 16.500 5 14Z" fill="#0b4a9e" stroke="none" /></I>
      <svg width="24" height="24" viewBox="0 0 24 24" className="ml-[17px] block shrink-0">
        <defs><linearGradient id="cp1" x1="0" y1="0" x2="0" y2="1"><stop stopColor="#2a86e8" /><stop offset=".5" stopColor="#26b89c" /><stop offset="1" stopColor="#f1c52e" /></linearGradient><linearGradient id="cp2" x1="0" y1="0" x2="0" y2="1"><stop stopColor="#a765f2" /><stop offset="1" stopColor="#f0607c" /></linearGradient></defs>
        <path d="M6 1H15Q17.500 1 18 4L19 6H14Q12 6 11 9L8.500 16Q8 18 5.500 18H3Q-.5 18 .7 13L3 4Q4 1 6 1Z" fill="url(#cp1)" /><path d="M12 .8H15Q17.500 1 18 4L19 6H14Z" fill="#1d55c8" />
        <path d="M18.500 6H21Q24 6.500 23 11L21 18H9Q12 17 13 13L15 8Q16 6 18.500 6Z" fill="url(#cp2)" /><rect x="5" y="15" width="18" height="8" rx="2" fill="#fcc51c" />
        <text x="14" y="21.600" textAnchor="middle" fontSize="7" fontWeight="bold" fontFamily="Open Sans, sans-serif" fill="#222">PRE</text>
      </svg>
    </footer>
  );
}

export default function App() {
  return (
    <div className="flex h-[768px] w-[1366px] flex-col overflow-hidden bg-[#f3f2f1] font-['Noto_Sans',sans-serif]">
      <TitleBar />
      <Tabs />
      <Ribbon />
      <main className="flex min-h-0 flex-1 overflow-hidden bg-[#e6e6e6] shadow-[inset_0_3px_3px_-1px_#cfcfcf]">
        <Document />
        <ScrollBar />
      </main>
      <StatusBar />
      <TaskBar />
    </div>
  );
}
